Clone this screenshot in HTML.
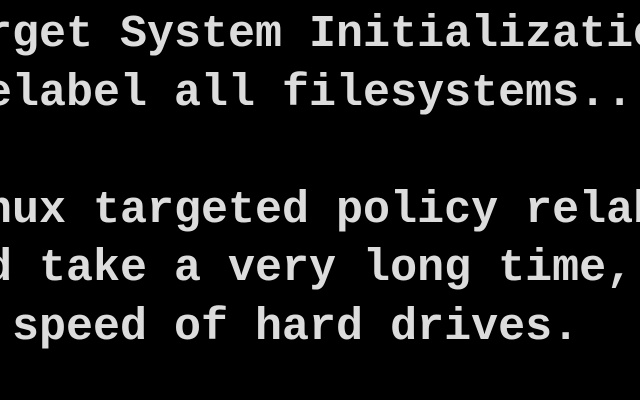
<!DOCTYPE html>
<html><head><meta charset="utf-8"><style>
html,body{margin:0;padding:0;background:#000;width:640px;height:400px;overflow:hidden}
#w{position:relative;width:640px;height:400px;overflow:hidden}
pre{position:absolute;left:-15px;top:6px;margin:0;font-family:"Liberation Mono",monospace;font-size:45px;line-height:58.6px;color:#dcdcdc;font-weight:bold;white-space:pre}
</style></head><body>
<div id="w"><pre>rget System Initialization
elabel all filesystems..

nux targeted policy relabel
d take a very long time, 
 speed of hard drives.</pre></div>
</body></html>
